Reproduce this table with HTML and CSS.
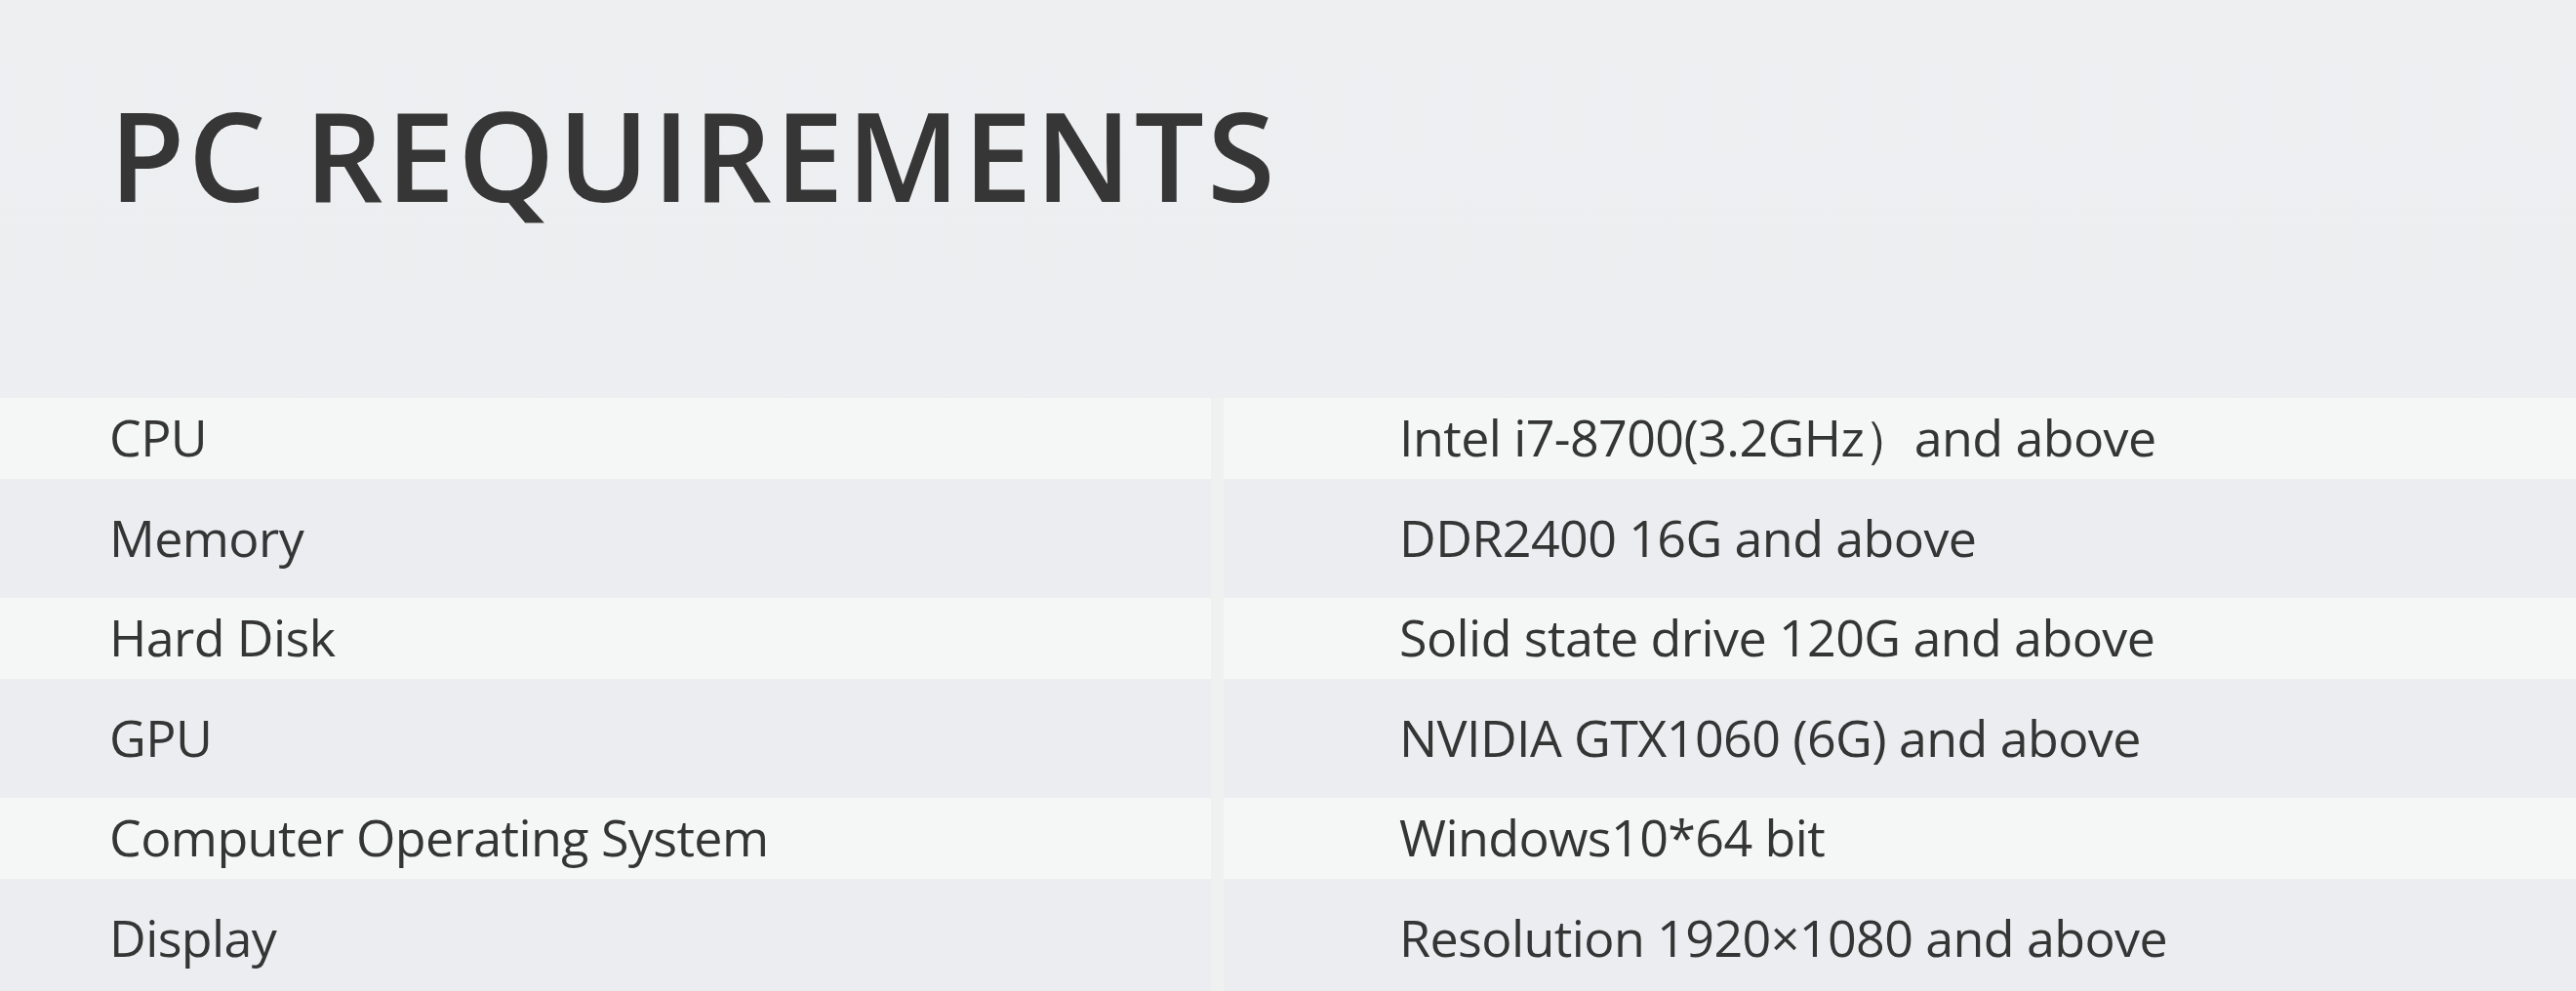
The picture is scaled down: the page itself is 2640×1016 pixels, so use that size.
FILE: index.html
```html
<!DOCTYPE html>
<html lang="en">
<head>
<meta charset="utf-8">
<title>PC Requirements</title>
<link rel="stylesheet" href="styles.css">
</head>
<body>
<main class="page">
  <header class="header">
    <h1 class="title">PC REQUIREMENTS</h1>
  </header>
  <section class="specs">
    <div class="row row-light"><div class="cell cell-name">CPU</div><div class="cell cell-value">Intel i7-8700(3.2GHz）and above</div></div>
    <div class="row row-dark"><div class="cell cell-name">Memory</div><div class="cell cell-value">DDR2400 16G and above</div></div>
    <div class="row row-light"><div class="cell cell-name">Hard Disk</div><div class="cell cell-value">Solid state drive 120G and above</div></div>
    <div class="row row-dark"><div class="cell cell-name">GPU</div><div class="cell cell-value">NVIDIA GTX1060 (6G) and above</div></div>
    <div class="row row-light"><div class="cell cell-name">Computer Operating System</div><div class="cell cell-value">Windows10*64 bit</div></div>
    <div class="row row-dark"><div class="cell cell-name">Display</div><div class="cell cell-value">Resolution 1920×1080 and above</div></div>
  </section>
</main>
</body>
</html>
```

FILE: styles.css
```css
html, body {
  margin: 0;
  padding: 0;
}
body {
  width: 2640px;
  height: 1016px;
  overflow: hidden;
  background: linear-gradient(180deg, #eeeff1 0%, #ecedf0 100%);
  font-family: "Open Sans", "Noto Sans", sans-serif;
  color: #353535;
}
.page {
  display: flex;
  flex-direction: column;
}
.header {
  height: 408px;
  box-sizing: border-box;
  padding: 95px 0 0 112px;
}
.title {
  margin: 0;
  font-size: 126px;
  line-height: 1;
  font-weight: 600;
  letter-spacing: 3.3px;
  color: #373637;
}
.specs {
  display: flex;
  flex-direction: column;
  background: #eff0f0;
}
.row {
  display: grid;
  grid-template-columns: 1241px 1fr;
  column-gap: 13px;
}
.row-light { height: 83px; }
.row-dark { height: 122px; }
.cell {
  display: flex;
  align-items: center;
  box-sizing: border-box;
  padding-bottom: 3px;
  font-size: 52px;
  line-height: 1;
  letter-spacing: -0.6px;
  white-space: nowrap;
}
.row-light .cell { background: #f5f7f6; }
.row-dark .cell { background: #ecedf0; }
.cell-name { padding-left: 112px; }
.cell-value { padding-left: 180px; }
```
